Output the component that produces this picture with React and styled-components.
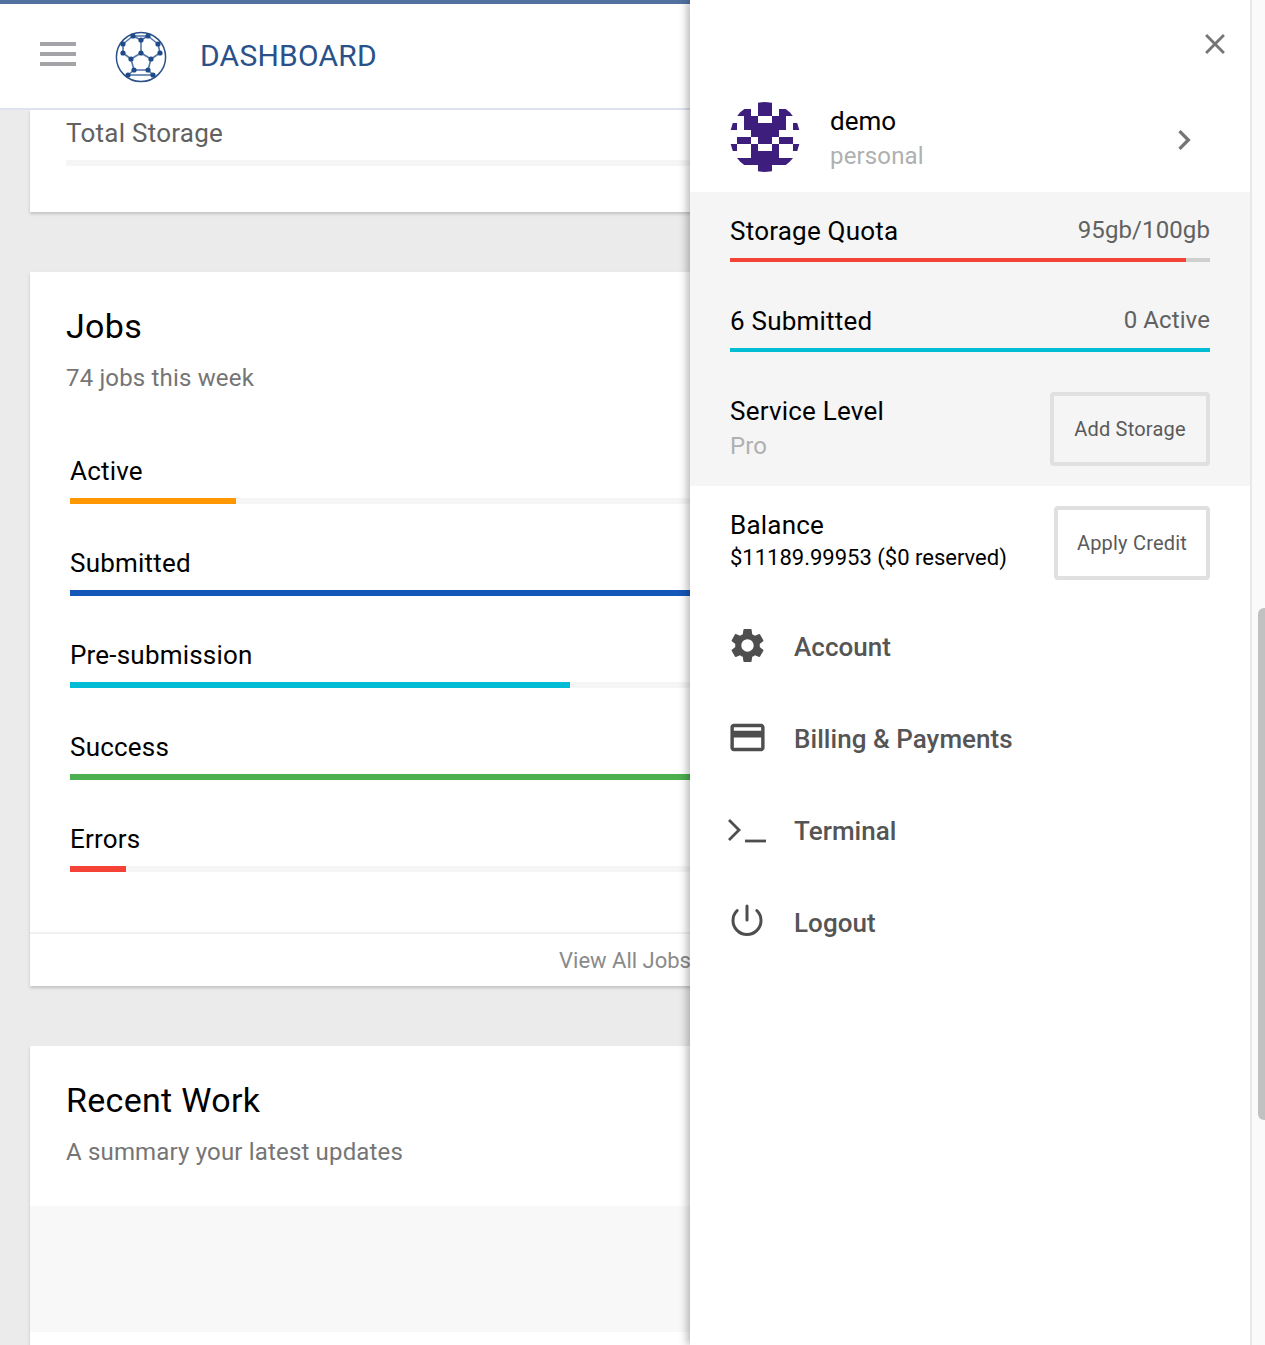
import React from 'react'
import styled, { createGlobalStyle } from 'styled-components'
import { MdClose, MdChevronRight, MdCreditCard, MdSettings } from 'react-icons/md'

const Global = createGlobalStyle`
  html, body { margin: 0; padding: 0; }
  body { font-family: Roboto, "Liberation Sans", sans-serif; overflow: hidden; }
  * { box-sizing: border-box; }
`

const Page = styled.div`
  position: relative;
  width: 1265px;
  height: 1345px;
  overflow: hidden;
  background: #ebebeb;
`

const Header = styled.header`
  display: flex;
  align-items: center;
  height: 110px;
  padding-left: 40px;
  background: #fff;
  border-top: 4px solid #52719f;
  border-bottom: 2px solid #dfe3ee;
`

const Burger = styled.div`
  display: flex;
  flex-direction: column;
  gap: 6px;
  width: 36px;
  margin: 0 39px 4px 0;
  span { display: block; height: 4px; background: #a3a3a8; }
`

const BallSvg = styled.svg`
  margin-top: 2px;
`

const Brand = styled.div`
  margin-left: 33px;
  font-size: 30px;
  line-height: 36px;
  letter-spacing: 0.22px;
  color: #2a5189;
`

const Content = styled.main`
  display: flex;
  flex-direction: column;
  gap: 60px;
  width: 1190px;
  margin-left: 30px;
`

const Card = styled.section`
  background: #fff;
  box-shadow: 0 2px 3px rgba(0, 0, 0, 0.18);
`

const StorageBody = styled.div`
  height: 102px;
  padding: 7px 36px 0;
`

const MutedLabel = styled.div`
  font-size: 26px;
  line-height: 32px;
  letter-spacing: 0.25px;
  color: #616161;
`

const Track = styled.div`
  height: ${p => p.$h || 6}px;
  background: ${p => p.$bg || '#f5f5f5'};
`

const Fill = styled.div`
  height: 100%;
  background: ${p => p.$color};
`

const StorageTrack = styled(Track)`
  margin-top: 11px;
`

const CardHead = styled.div`
  padding: 34px 36px 0;
`

const Title = styled.h2`
  margin: 0;
  font-size: 34px;
  line-height: 40px;
  font-weight: 400;
  letter-spacing: 0.3px;
  color: #000;
`

const Subtitle = styled.p`
  margin: 18px 0 0;
  font-size: 24px;
  line-height: 28px;
  letter-spacing: 0.17px;
  color: #757575;
`

const JobList = styled.div`
  display: flex;
  flex-direction: column;
  gap: 43px;
  height: 540px;
  padding: 63px 40px 0;
`

const JobLabel = styled.div`
  font-size: 26px;
  line-height: 32px;
  letter-spacing: 0.2px;
  color: #000;
`

const JobTrack = styled(Track)`
  margin-top: 11px;
`

const CardFooter = styled.div`
  height: 54px;
  border-top: 2px solid #f0f0f0;
  font-size: 22px;
  line-height: 54px;
  text-align: center;
  color: #8a8a8a;
`

const RecentHead = styled(CardHead)`
  height: 160px;
`

const EmptyArea = styled.div`
  height: 126px;
  background: #f8f8f8;
`

const RecentTail = styled.div`
  height: 40px;
`

const Drawer = styled.aside`
  position: absolute;
  top: 0;
  left: 690px;
  bottom: 0;
  width: 562px;
  background: #fff;
  border-right: 2px solid #e8e8e8;
  box-shadow: -3px 0 8px rgba(0, 0, 0, 0.28);
`

const ScrollTrack = styled.div`
  position: absolute;
  top: 0;
  right: 0;
  bottom: 0;
  width: 13px;
  background: #fafafa;
`

const ScrollThumb = styled.div`
  position: absolute;
  top: 608px;
  left: 6px;
  width: 7px;
  height: 512px;
  background: #c1c1c1;
  border-radius: 6px 0 0 6px;
`

const CloseRow = styled.div`
  display: flex;
  justify-content: flex-end;
  height: 102px;
  padding: 27px 18px 0 0;
  color: #757575;
  line-height: 0;
`

const Profile = styled.div`
  display: flex;
  align-items: center;
  height: 90px;
  padding: 0 50px 20px 40px;
`

const ProfileText = styled.div`
  flex: 1;
  margin: 3px 0 0 30px;
`

const Name = styled.div`
  font-size: 26px;
  line-height: 35px;
  color: #000;
`

const Faint = styled.div`
  font-size: 24px;
  line-height: 35px;
  letter-spacing: 0.15px;
  color: #b0b0b0;
`

const Chevron = styled.div`
  color: #757575;
  line-height: 0;
  margin: 6px -4px 0 0;
`

const Quota = styled.div`
  height: 294px;
  padding: 20px 40px 0;
  background: #f5f5f5;
`

const MeterHead = styled.div`
  display: flex;
  justify-content: space-between;
  align-items: center;
  height: 38px;
`

const MeterName = styled.div`
  font-size: 26px;
  line-height: 38px;
  letter-spacing: 0.22px;
  color: #000;
`

const MeterValue = styled.div`
  margin-bottom: 2px;
  font-size: 24px;
  line-height: 36px;
  letter-spacing: 0.1px;
  color: #616161;
`

const Meter = styled.div`
  margin-bottom: 40px;
`

const MeterTrack = styled(Track)`
  margin-top: 8px;
`

const SplitRow = styled.div`
  display: flex;
  justify-content: space-between;
  align-items: center;
`

const Outline = styled.button`
  width: ${p => p.$w}px;
  height: 74px;
  padding: 0;
  background: transparent;
  border: 4px solid #e0e0e0;
  border-radius: 4px;
  font-family: inherit;
  font-size: 20px;
  letter-spacing: 0.2px;
  color: #5a5a5a;
`

const Level = styled.div`
  font-size: 26px;
  line-height: 35px;
  letter-spacing: 0.22px;
  color: #000;
`

const BalanceRow = styled(SplitRow)`
  height: 115px;
  padding: 20px 40px 21px;
`

const BalanceText = styled.div`
  padding-bottom: 6px;
`

const BalanceValue = styled.div`
  font-size: 22px;
  line-height: 30px;
  color: #000;
`

const Menu = styled.nav`
  display: flex;
  flex-direction: column;
  padding: 0 40px;
`

const MenuItem = styled.a`
  display: flex;
  align-items: center;
  height: 92px;
  font-size: 26px;
  font-weight: 500;
  letter-spacing: 0.05px;
  color: #555;
  text-decoration: none;
`

const MenuIcon = styled.span`
  display: flex;
  justify-content: center;
  align-items: center;
  width: 34px;
  height: 38px;
  margin-right: 30px;
  margin-bottom: ${p => p.$up || 0}px;
  color: #4e4e4e;
  svg { flex-shrink: 0; }
`

const JOBS = [
  { name: 'Active', color: '#ff9800', width: 166 },
  { name: 'Submitted', color: '#1457b8', width: 1110 },
  { name: 'Pre-submission', color: '#00bcd4', width: 500 },
  { name: 'Success', color: '#4caf50', width: 1110 },
  { name: 'Errors', color: '#f44336', width: 56 }
]

const NODES = [
  [0, -4], [-10, 2], [10, 2], [-7, 13], [7, 13], [0, -17], [-8, -21], [7, -21],
  [-18, -13], [17, -13], [-18, -4], [19, -4], [-13, 18], [12, 18]
]

const EDGES = [
  [0, 1], [0, 2], [1, 3], [2, 4], [3, 4], [0, 5], [5, 6], [5, 7], [6, 8], [7, 9],
  [8, 10], [9, 11], [10, 1], [11, 2], [3, 12], [4, 13], [6, 7], [12, 13]
]

const Ball = () => (
  <BallSvg width='52' height='52' viewBox='-26 -26 52 52'>
    <circle r='24.6' fill='none' stroke='#2a5189' strokeWidth='1.5' />
    {EDGES.map(([a, b], i) => (
      <line key={i} x1={NODES[a][0]} y1={NODES[a][1]} x2={NODES[b][0]} y2={NODES[b][1]} stroke='#5578a8' strokeWidth='1.6' />
    ))}
    {NODES.map(([x, y], i) => <circle key={i} cx={x} cy={y} r='2.6' fill='#1f4b88' />)}
  </BallSvg>
)

// each row: [start col, end col]
const AVATAR = [
  [[4, 6]],
  [[1, 3], [4, 6], [7, 9]],
  [[2, 4], [6, 8]],
  [[0, 1], [2, 8], [9, 10]],
  [[3, 7]],
  [[1, 3], [4, 6], [7, 9]],
  [[0, 1], [3, 4], [6, 7], [9, 10]],
  [[3, 7]],
  [[1, 9]],
  [[4, 6]]
]

const Avatar = () => (
  <svg width='70' height='70' viewBox='0 0 70 70'>
    <defs>
      <clipPath id='avatarClip'><circle cx='35' cy='35' r='35' /></clipPath>
    </defs>
    <g clipPath='url(#avatarClip)' fill='#3d1e7c'>
      {AVATAR.map((row, y) => row.map(([a, b]) => (
        <rect key={y + '-' + a} x={a * 7} y={y * 7} width={(b - a) * 7} height='7' />
      )))}
    </g>
  </svg>
)

const TerminalIcon = () => (
  <svg width='38' height='26' viewBox='0 0 38 26' fill='none' stroke='currentColor' strokeWidth='2.8'>
    <path d='M1 2l10 10L1 22' />
    <path d='M17 23h21' />
  </svg>
)

const PowerIcon = () => (
  <svg width='32' height='32' viewBox='0 0 32 32' fill='none' stroke='currentColor' strokeWidth='3' strokeLinecap='round'>
    <path d='M16 2v14' />
    <path d='M6.2 6.5a14 14 0 1 0 19.6 0' />
  </svg>
)

const MENU = [
  { label: 'Account', icon: <MdSettings size={41} />, up: 4 },
  { label: 'Billing & Payments', icon: <MdCreditCard size={41} />, up: 4 },
  { label: 'Terminal', icon: <TerminalIcon />, up: 0 },
  { label: 'Logout', icon: <PowerIcon />, up: 6 }
]

export default function App () {
  return (
    <Page>
      <Global />
      <Header>
        <Burger><span /><span /><span /></Burger>
        <Ball />
        <Brand>DASHBOARD</Brand>
      </Header>
      <Content>
        <Card>
          <StorageBody>
            <MutedLabel>Total Storage</MutedLabel>
            <StorageTrack />
          </StorageBody>
        </Card>
        <Card>
          <CardHead>
            <Title>Jobs</Title>
            <Subtitle>74 jobs this week</Subtitle>
          </CardHead>
          <JobList>
            {JOBS.map(job => (
              <div key={job.name}>
                <JobLabel>{job.name}</JobLabel>
                <JobTrack>
                  <Fill $color={job.color} style={{ width: job.width }} />
                </JobTrack>
              </div>
            ))}
          </JobList>
          <CardFooter>View All Jobs</CardFooter>
        </Card>
        <Card>
          <RecentHead>
            <Title>Recent Work</Title>
            <Subtitle>A summary your latest updates</Subtitle>
          </RecentHead>
          <EmptyArea />
          <RecentTail />
        </Card>
      </Content>

      <Drawer>
        <CloseRow><MdClose size={34} /></CloseRow>
        <Profile>
          <Avatar />
          <ProfileText>
            <Name>demo</Name>
            <Faint>personal</Faint>
          </ProfileText>
          <Chevron><MdChevronRight size={40} /></Chevron>
        </Profile>
        <Quota>
          <Meter>
            <MeterHead>
              <MeterName>Storage Quota</MeterName>
              <MeterValue>95gb/100gb</MeterValue>
            </MeterHead>
            <MeterTrack $h={4} $bg='#cfcfcf'>
              <Fill $color='#f44336' style={{ width: '95%' }} />
            </MeterTrack>
          </Meter>
          <Meter>
            <MeterHead>
              <MeterName>6 Submitted</MeterName>
              <MeterValue>0 Active</MeterValue>
            </MeterHead>
            <MeterTrack $h={4}>
              <Fill $color='#00bcd4' />
            </MeterTrack>
          </Meter>
          <SplitRow>
            <div>
              <Level>Service Level</Level>
              <Faint>Pro</Faint>
            </div>
            <Outline $w={160}>Add Storage</Outline>
          </SplitRow>
        </Quota>
        <BalanceRow>
          <BalanceText>
            <Level>Balance</Level>
            <BalanceValue>$11189.99953 ($0 reserved)</BalanceValue>
          </BalanceText>
          <Outline $w={156}>Apply Credit</Outline>
        </BalanceRow>
        <Menu>
          {MENU.map(item => (
            <MenuItem key={item.label} href='#'>
              <MenuIcon $up={item.up}>{item.icon}</MenuIcon>
              {item.label}
            </MenuItem>
          ))}
        </Menu>
      </Drawer>
      <ScrollTrack><ScrollThumb /></ScrollTrack>
    </Page>
  )
}
